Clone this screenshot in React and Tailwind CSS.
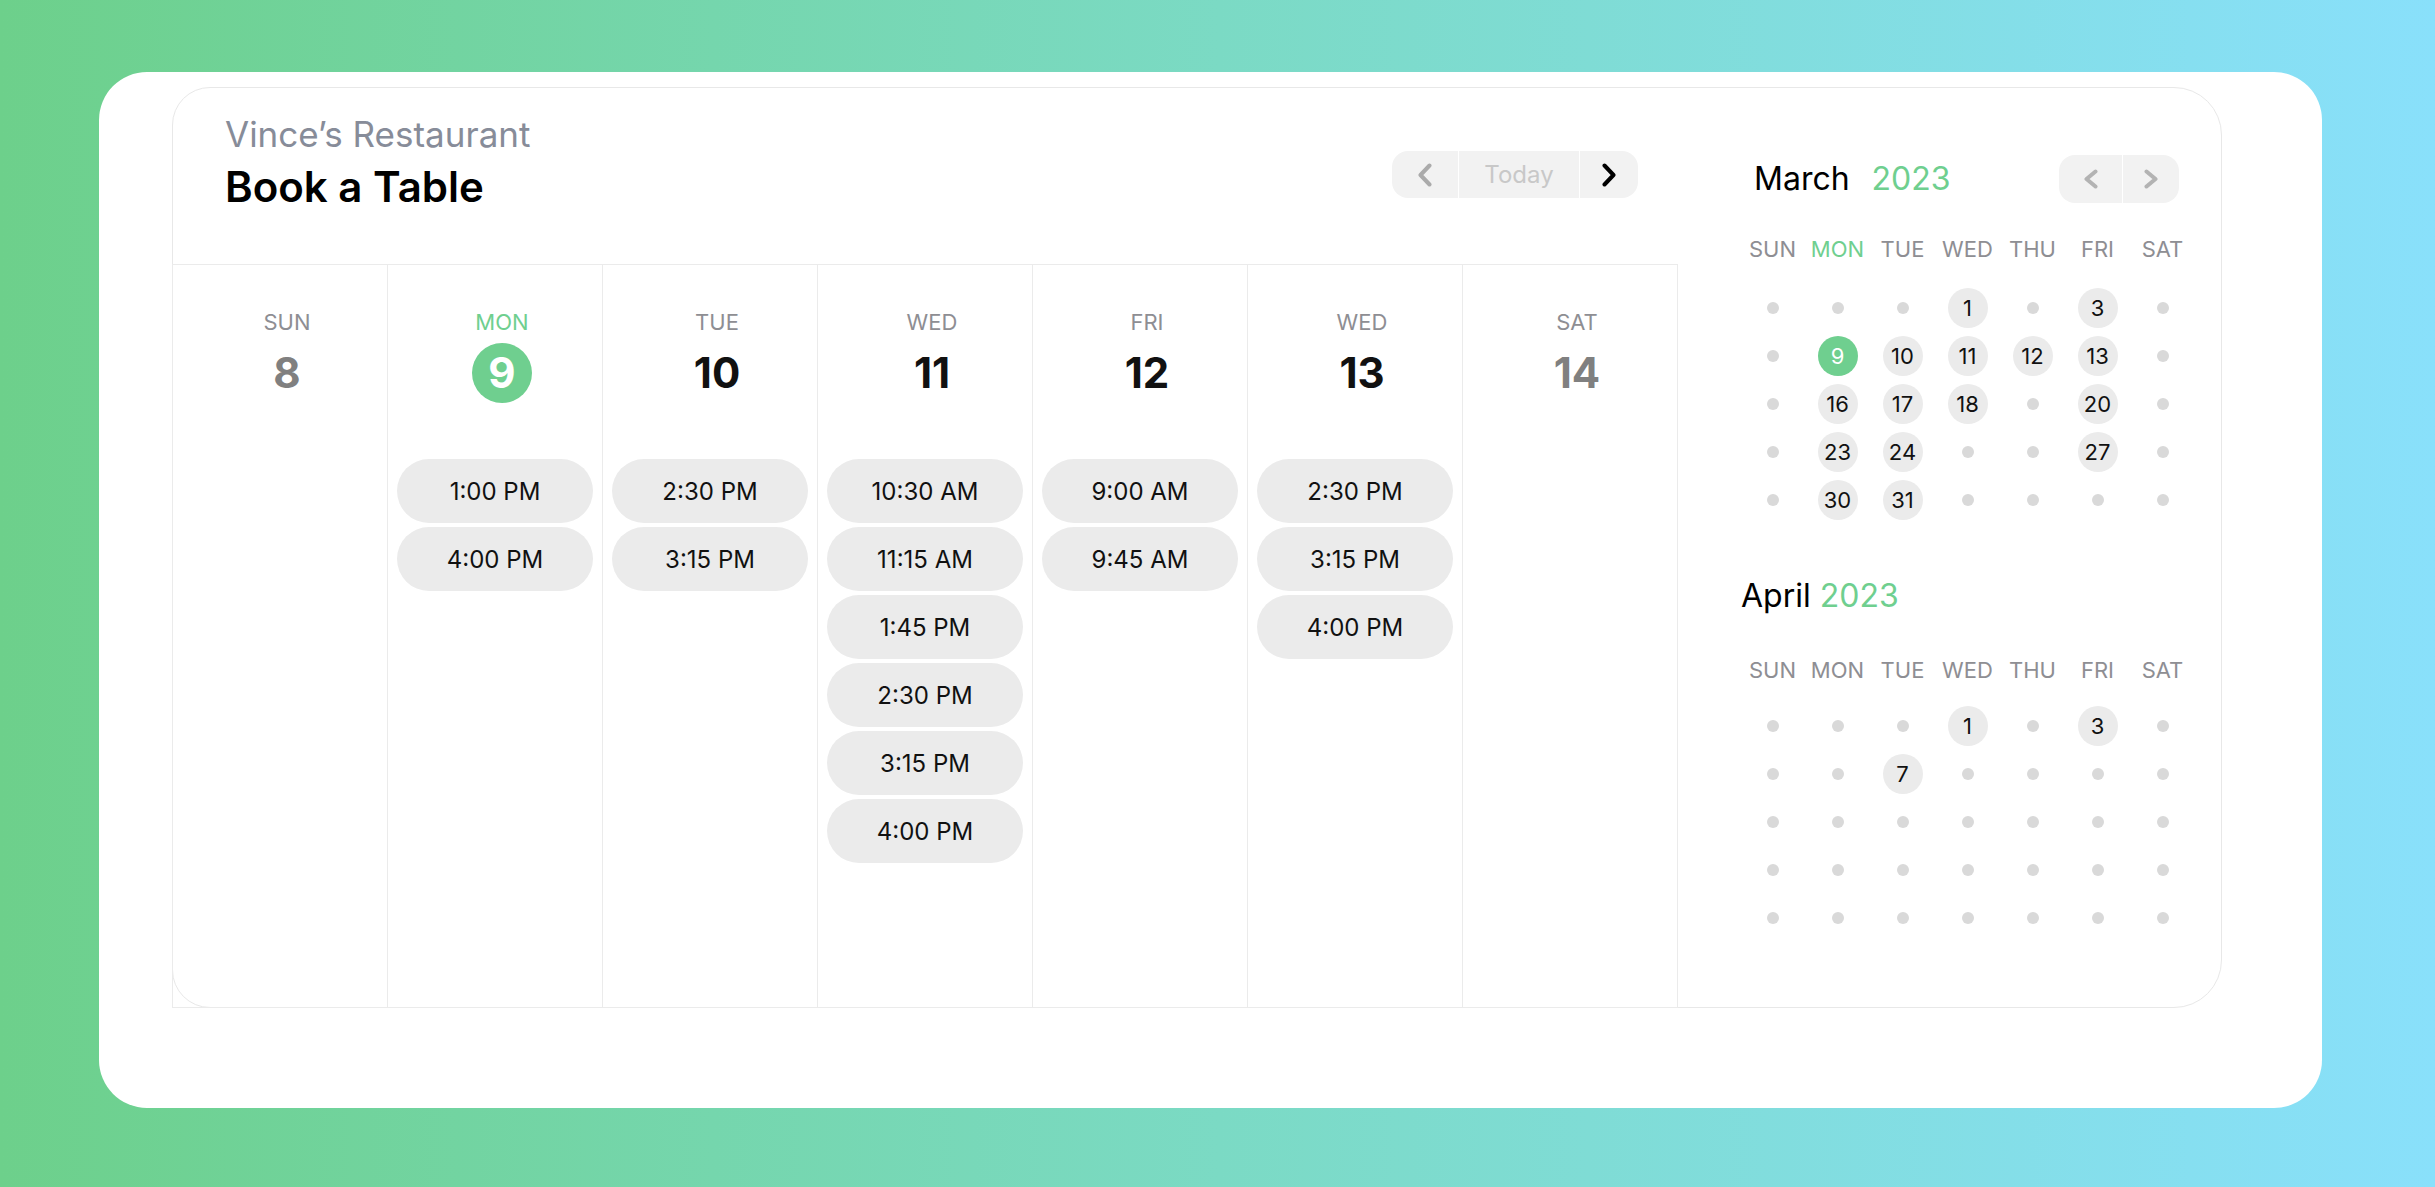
import React from 'react';

// Day columns of the booking grid
const days = [
  { label: 'SUN', num: 8, muted: true, slots: [] },
  { label: 'MON', num: 9, today: true, slots: ['1:00 PM', '4:00 PM'] },
  { label: 'TUE', num: 10, slots: ['2:30 PM', '3:15 PM'] },
  { label: 'WED', num: 11, slots: ['10:30 AM', '11:15 AM', '1:45 PM', '2:30 PM', '3:15 PM', '4:00 PM'] },
  { label: 'FRI', num: 12, slots: ['9:00 AM', '9:45 AM'] },
  { label: 'WED', num: 13, slots: ['2:30 PM', '3:15 PM', '4:00 PM'] },
  { label: 'SAT', num: 14, muted: true, slots: [] },
];

const weekdays = ['SUN', 'MON', 'TUE', 'WED', 'THU', 'FRI', 'SAT'];

// null = dot, number = available day
const march = [
  [null, null, null, 1, null, 3, null],
  [null, 9, 10, 11, 12, 13, null],
  [null, 16, 17, 18, null, 20, null],
  [null, 23, 24, null, null, 27, null],
  [null, 30, 31, null, null, null, null],
];

const april = [
  [null, null, null, 1, null, 3, null],
  [null, null, 7, null, null, null, null],
  [null, null, null, null, null, null, null],
  [null, null, null, null, null, null, null],
  [null, null, null, null, null, null, null],
];

const Chevron = ({ dir = 'left', color = '#b0b0b0', h = 24 }) => (
  <svg width="14" height={h} viewBox={`0 0 14 ${h}`} fill="none">
    <polyline
      points={dir === 'left' ? `11.5,2.5 2.5,${h / 2} 11.5,${h - 2.5}` : `2.5,2.5 11.5,${h / 2} 2.5,${h - 2.5}`}
      stroke={color}
      strokeWidth="4"
      strokeLinecap="round"
      strokeLinejoin="round"
    />
  </svg>
);

const DayColumn = ({ day }) => (
  <div className="w-[215px] shrink-0 border-r border-[#ebebeb] flex flex-col items-center pt-[43px]">
    <div className="pl-[14px] flex flex-col items-center">
      <div
        className={`text-[22px] leading-[28px] ${day.today ? 'text-[#6fcf8f]' : 'text-[#8e8e93]'}`}
      >
        {day.label}
      </div>
      <div className="mt-[7px] h-[60px] flex items-center justify-center">
        {day.today ? (
          <div className="w-[60px] h-[60px] rounded-full bg-[#6fcf8f] flex items-center justify-center text-white text-[42px] font-bold leading-none">
            {day.num}
          </div>
        ) : (
          <div className={`text-[42px] font-bold leading-none ${day.muted ? 'text-[#808080]' : 'text-[#111111]'}`}>
            {day.num}
          </div>
        )}
      </div>
    </div>
    <div className="mt-[56px] w-full px-[9px] flex flex-col gap-[4px]">
      {day.slots.map((s, i) => (
        <div
          key={i}
          className="h-[64px] pt-[2px] rounded-full bg-[#ebebeb] flex items-center justify-center text-[24px] text-[#111111]"
        >
          {s}
        </div>
      ))}
    </div>
  </div>
);

const MonthGrid = ({ rows, highlightMon, todayNum }) => (
  <>
    <div className="grid grid-cols-7 h-[30px] text-[22px] leading-[30px] text-center">
      {weekdays.map((w, i) => (
        <div key={i} className={highlightMon && w === 'MON' ? 'text-[#6fcf8f]' : 'text-[#8e8e93]'}>
          {w}
        </div>
      ))}
    </div>
    <div className={highlightMon ? 'mt-[20px]' : 'mt-[17px]'}>
      {rows.map((row, r) => (
        <div key={r} className="grid grid-cols-7 h-[48px]">
          {row.map((n, c) => (
            <div key={c} className="flex items-center justify-center">
              {n === null ? (
                <div className="w-[12px] h-[12px] rounded-full bg-[#d9d9d9]" />
              ) : n === todayNum ? (
                <div className="w-[40px] h-[40px] rounded-full bg-[#6fcf8f] flex items-center justify-center text-white text-[22px]">
                  {n}
                </div>
              ) : (
                <div className="w-[40px] h-[40px] rounded-full bg-[#ebebeb] flex items-center justify-center text-[#111111] text-[22px]">
                  {n}
                </div>
              )}
            </div>
          ))}
        </div>
      ))}
    </div>
  </>
);

export default function App() {
  return (
    <div
      className="w-[2435px] h-[1187px] bg-gradient-to-r from-[#6dd08b] via-[#7bdac4] to-[#89e0fb] pl-[99px] pt-[72px]"
      style={{ fontFamily: 'Inter, "Noto Sans", sans-serif' }}
    >
      <div className="w-[2223px] h-[1036px] bg-white rounded-[48px] pl-[73px] pt-[15px] pr-[100px] pb-[100px] flex">
        <div className="flex-1 flex border border-[#e8e8e8] rounded-r-[48px] rounded-l-[38px]">
          {/* Left: header + day grid */}
          <div className="-ml-px -mb-px w-[1506px] shrink-0 flex flex-col">
            <div className="h-[176px] shrink-0 flex items-start justify-between pl-[53px] pr-[40px] pt-[24px]">
              <div>
                <div className="text-[35px] leading-[44px] text-[#878c99]">Vince’s Restaurant</div>
                <div className="mt-[6px] text-[42px] leading-[50px] font-semibold text-black">Book a Table</div>
              </div>
              <div className="mt-[39px] w-[246px] h-[47px] rounded-[16px] bg-[#f2f2f2] flex overflow-hidden">
                <div className="w-[66px] flex items-center justify-center">
                  <Chevron dir="left" color="#ababab" h={24} />
                </div>
                <div className="w-px bg-white" />
                <div className="w-[120px] flex items-center justify-center text-[24px] text-[#c8c8c8]">Today</div>
                <div className="w-px bg-white" />
                <div className="w-[58px] flex items-center justify-center">
                  <Chevron dir="right" color="#000000" h={24} />
                </div>
              </div>
            </div>
            <div className="flex-1 flex border-t border-b border-l border-[#ebebeb]">
              {days.map((d, i) => (
                <DayColumn key={i} day={d} />
              ))}
            </div>
          </div>

          {/* Right: month calendars */}
          <div className="flex-1 pl-[62px] pt-[67px]">
            <div className="w-[455px]">
              <div className="h-[48px] flex items-center justify-between">
                <div className="pl-[14px] text-[32px] leading-[40px]">
                  <span className="text-black">March</span>
                  <span className="ml-[22px] text-[#6fcf8f]">2023</span>
                </div>
                <div className="mr-[16px] w-[120px] h-[48px] rounded-[16px] bg-[#f2f2f2] flex overflow-hidden">
                  <div className="w-[63px] flex items-center justify-center">
                    <Chevron dir="left" color="#b3b3b3" h={20} />
                  </div>
                  <div className="w-px bg-white" />
                  <div className="flex-1 flex items-center justify-center">
                    <Chevron dir="right" color="#b3b3b3" h={20} />
                  </div>
                </div>
              </div>
              <div className="mt-[31px]">
                <MonthGrid rows={march} highlightMon todayNum={9} />
              </div>

              <div className="mt-[52px] h-[40px] pl-[1px] text-[32px] leading-[40px]">
                <span className="text-black">April</span>
                <span className="text-[#6fcf8f]"> 2023</span>
              </div>
              <div className="mt-[39px]">
                <MonthGrid rows={april} todayNum={-1} />
              </div>
            </div>
          </div>
        </div>
      </div>
    </div>
  );
}
